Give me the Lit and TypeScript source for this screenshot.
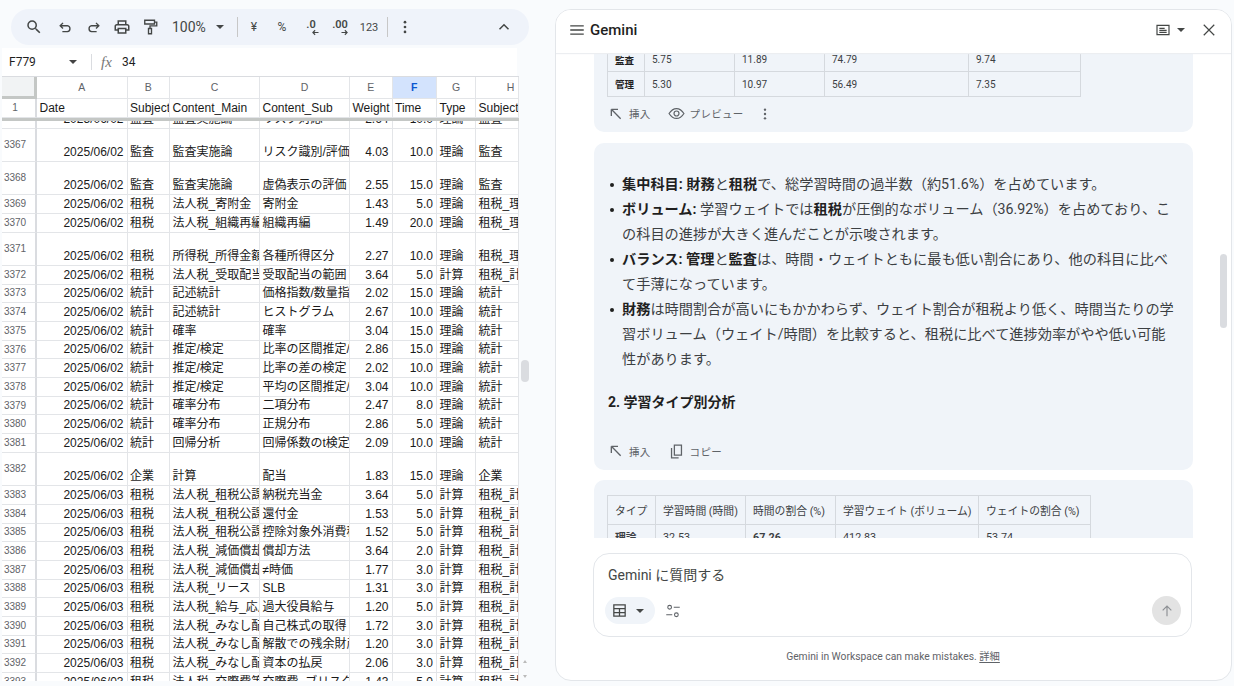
import {LitElement, html, css} from 'lit';
import {customElement} from 'lit/decorators.js';

const P: Record<string, string> = {
  search: 'M15.5 14h-.79l-.28-.27A6.471 6.471 0 0 0 16 9.5 6.5 6.5 0 1 0 9.5 16c1.61 0 3.09-.59 4.23-1.57l.27.28v.79l5 4.99L20.49 19l-4.99-5zm-6 0C7.01 14 5 11.99 5 9.5S7.01 5 9.5 5 14 7.01 14 9.5 11.99 14 9.5 14z',
  print: 'M19 8h-1V3H6v5H5c-1.66 0-3 1.34-3 3v6h4v4h12v-4h4v-6c0-1.66-1.34-3-3-3zM8 5h8v3H8V5zm8 12v2H8v-4h8v2zm2-2v-2H6v2H4v-4c0-.55.45-1 1-1h14c.55 0 1 .45 1 1v4h-2z',
};

const fill = (name: string, size = 18) => html`<svg width=${size} height=${size} viewBox="0 0 24 24" fill="currentColor"><path d=${P[name]}></path></svg>`;
const stroke = (d: string, size = 18, sw = 1.8) => html`<svg width=${size} height=${size} viewBox="0 0 24 24" fill="none" stroke="currentColor" stroke-width=${sw}><path d=${d}></path></svg>`;
const caret = () => html`<svg width="8" height="4" viewBox="0 0 8 4" fill="currentColor"><path d="M0 0h8L4 4z"></path></svg>`;
const dots = (size = 18) => html`<svg width=${size} height=${size} viewBox="0 0 24 24" fill="currentColor"><circle cx="12" cy="5.5" r="1.8"></circle><circle cx="12" cy="12" r="1.8"></circle><circle cx="12" cy="18.5" r="1.8"></circle></svg>`;

type Row = [string, string, string, string, string, string, string, string, string, string?];
const d2 = '2025/06/02';
const d3 = '2025/06/03';
// last flag: s = scrolled under the frozen row, t = tall row
const rows: Row[] = [
  ['3366', d2, '監査', '監査実施論', 'リスク対応', '2.64', '10.0', '理論', '監査', 's'],
  ['3367', d2, '監査', '監査実施論', 'リスク識別/評価', '4.03', '10.0', '理論', '監査', 't'],
  ['3368', d2, '監査', '監査実施論', '虚偽表示の評価', '2.55', '15.0', '理論', '監査', 't'],
  ['3369', d2, '租税', '法人税_寄附金', '寄附金', '1.43', '5.0', '理論', '租税_理論'],
  ['3370', d2, '租税', '法人税_組織再編', '組織再編', '1.49', '20.0', '理論', '租税_理論'],
  ['3371', d2, '租税', '所得税_所得金額', '各種所得区分', '2.27', '10.0', '理論', '租税_理論', 't'],
  ['3372', d2, '租税', '法人税_受取配当', '受取配当の範囲', '3.64', '5.0', '計算', '租税_計算'],
  ['3373', d2, '統計', '記述統計', '価格指数/数量指数', '2.02', '15.0', '理論', '統計'],
  ['3374', d2, '統計', '記述統計', 'ヒストグラム', '2.67', '10.0', '理論', '統計'],
  ['3375', d2, '統計', '確率', '確率', '3.04', '15.0', '理論', '統計'],
  ['3376', d2, '統計', '推定/検定', '比率の区間推定/', '2.86', '15.0', '理論', '統計'],
  ['3377', d2, '統計', '推定/検定', '比率の差の検定', '2.02', '10.0', '理論', '統計'],
  ['3378', d2, '統計', '推定/検定', '平均の区間推定/', '3.04', '10.0', '理論', '統計'],
  ['3379', d2, '統計', '確率分布', '二項分布', '2.47', '8.0', '理論', '統計'],
  ['3380', d2, '統計', '確率分布', '正規分布', '2.86', '5.0', '理論', '統計'],
  ['3381', d2, '統計', '回帰分析', '回帰係数のt検定', '2.09', '10.0', '理論', '統計'],
  ['3382', d2, '企業', '計算', '配当', '1.83', '15.0', '理論', '企業', 't'],
  ['3383', d3, '租税', '法人税_租税公課', '納税充当金', '3.64', '5.0', '計算', '租税_計算'],
  ['3384', d3, '租税', '法人税_租税公課', '還付金', '1.53', '5.0', '計算', '租税_計算'],
  ['3385', d3, '租税', '法人税_租税公課', '控除対象外消費税', '1.52', '5.0', '計算', '租税_計算'],
  ['3386', d3, '租税', '法人税_減価償却', '償却方法', '3.64', '2.0', '計算', '租税_計算'],
  ['3387', d3, '租税', '法人税_減価償却', '≠時価', '1.77', '3.0', '計算', '租税_計算'],
  ['3388', d3, '租税', '法人税_リース', 'SLB', '1.31', '3.0', '計算', '租税_計算'],
  ['3389', d3, '租税', '法人税_給与_応用', '過大役員給与', '1.20', '5.0', '計算', '租税_計算'],
  ['3390', d3, '租税', '法人税_みなし配当', '自己株式の取得', '1.72', '3.0', '計算', '租税_計算'],
  ['3391', d3, '租税', '法人税_みなし配当', '解散での残余財産', '1.20', '3.0', '計算', '租税_計算'],
  ['3392', d3, '租税', '法人税_みなし配当', '資本の払戻', '2.06', '3.0', '計算', '租税_計算'],
  ['3393', d3, '租税', '法人税_交際費等', '交際費_ブリスク', '1.43', '5.0', '計算', '租税_計算'],
];

@customElement('app-root')
class AppRoot extends LitElement {
  static override styles = css`
    :host {
      display: flex;
      width: 1234px;
      height: 686px;
      overflow: hidden;
      background: #f9fbfd;
      font-family: Roboto, "Noto Sans CJK JP", sans-serif;
      color: #1f1f1f;
    }
    svg { display: block; flex: none; }

    .sheet { width: 530px; flex: none; display: flex; flex-direction: column; box-sizing: border-box; padding-top: 9px; height: 681px; }
    .toolbar {
      margin-left: 11px;
      width: 518px;
      height: 36px;
      flex: none;
      box-sizing: border-box;
      padding-left: 9px;
      padding-right: 11px;
      border-radius: 18px;
      background: #eff3fa;
      display: flex;
      align-items: center;
      color: #444746;
    }
    .tb { width: 28px; height: 28px; display: flex; align-items: center; justify-content: center; flex: none; font-size: 11px; }
    .tb--search { margin-right: 3px; }
    .tb--small svg { margin-top: 3px; }
    .tb--print { margin-left: 1px; }
    .tb--fmt { font-size: 12px; }
    .tb--arrow { flex-direction: column; font-weight: 600; line-height: 10px; font-size: 11px; box-sizing: border-box; padding-top: 2px; }
    .tb--arrow svg { margin: -2px 0 0 8px; }
    .tb--first { margin-left: 1px; }
    .tb--last { margin-left: auto; }
    .zoom { margin-left: 8px; width: 56px; display: flex; align-items: center; font-size: 14px; gap: 10px; flex: none; }
    .tb-sep { width: 1px; height: 20px; background: #c7c7c7; margin: 0 2px 0 9px; flex: none; }
    .tb-sep--b { margin: 0 3px 0 4px; }

    .formula {
      margin-top: 3px;
      height: 28px;
      flex: none;
      width: 515px;
      margin-left: 2px;
      background: #fff;
      display: flex;
      align-items: center;
      font-size: 12px;
      color: #1f1f1f;
    }
    .formula__name { width: 67px; box-sizing: border-box; padding-left: 7px; flex: none; font-size: 12px; }
    .formula__caret { width: 22px; flex: none; color: #444; }
    .formula__sep { width: 1px; height: 16px; background: #dadce0; flex: none; }
    .formula__fx { margin-left: 9px; width: 21px; font: italic 15px "Liberation Serif", serif; color: #777; flex: none; }

    .grid-area { display: flex; flex: 1; min-height: 0; }
    .grid { width: 517px; margin-left: 2px; flex: none; background: #fff; overflow: hidden; display: flex; flex-direction: column; font: 12px/16px "Liberation Sans", "Noto Sans CJK JP", sans-serif; color: #1a1a1a; }
    .row {
      display: grid;
      grid-template-columns: 35px 90.5px 42.5px 90px 90px 42.5px 44.5px 39px 43px;
      height: 18.7px;
      flex: none;
    }
    .row--t { height: 33.3px; }
    .row--s { height: 8px; }
    .row > div {
      box-sizing: border-box;
      border-right: 1px solid #e3e5e8;
      border-bottom: 1px solid #e3e5e8;
      overflow: hidden;
      white-space: nowrap;
      display: flex;
      align-items: flex-end;
      padding: 0 0 1px 2.5px;
    }
    .row > .rh { font-size: 10px; color: #5f6368; padding: 0 7px 0 0; justify-content: center; align-items: center; border-right: 2px solid #dadce0; }
    .row > .num { justify-content: flex-end; padding: 0 3px 1px 0; }
    .letters { height: 22.7px; border-top: 1px solid #dadce0; box-sizing: border-box; }
    .letters > div { font-size: 10.5px; color: #5f6368; justify-content: center; align-items: center; padding: 0 0 1px; }
    .letters > .corner { background: #f1f3f4; border-right: 3px solid #c4c7c5; border-bottom: 3px solid #c4c7c5; }
    .letters > .active { background: #d3e3fd; color: #0b57d0; font-weight: 700; }
    .letters > .wide { padding-left: 27px; }
    .frozen { height: 19px; }
    .frozen > .rh { font-size: 10px; }
    .freeze { height: 3px; background: #c4c7c5; flex: none; }
    .rail { flex: 1; position: relative; }
    .rail__thumb { position: absolute; left: 2px; top: 284px; width: 8px; height: 22px; border-radius: 4px; background: #dadce0; }
    .rail__up, .rail__down { position: absolute; left: 4px; width: 0; height: 0; border-left: 2.5px solid transparent; border-right: 2.5px solid transparent; }
    .rail__up { top: 584px; border-bottom: 3px solid #bbb; }
    .rail__down { top: 599px; border-top: 3px solid #bbb; }

    .panel {
      margin: 9px 0 0 25px;
      width: 677px;
      height: 672px;
      flex: none;
      box-sizing: border-box;
      background: #fff;
      border: 1px solid #e3e6ea;
      border-radius: 16px;
      display: flex;
      flex-direction: column;
      position: relative;
      overflow: hidden;
    }
    .panel__head {
      height: 43px;
      flex: none;
      box-sizing: border-box;
      padding: 0 13px 3px 12px;
      display: flex;
      align-items: center;
      background: #fff;
      box-shadow: 0 1px 1px #eceef1;
      position: relative;
      z-index: 1;
      color: #444746;
    }
    .panel__title { font-size: 15px; margin-left: 4px; color: #1f1f1f; font-weight: 500; }
    .panel__right { margin-left: auto; display: flex; align-items: center; gap: 6px; }
    .panel__x { margin-left: 9px; }

    .scroll { height: 485px; flex: none; overflow: hidden; padding: 0 38px; display: flex; flex-direction: column; gap: 11px; position: relative; }
    .card { background: #f0f4f9; border-radius: 10px; padding: 0 14px; flex: none; }
    .card--first { border-radius: 0 0 10px 10px; height: 79px; }
    .card--body { height: 327px; box-sizing: border-box; padding-top: 29px; margin-bottom: -1px; }
    .card--last { padding-top: 15px; height: 80px; }
    table { border-collapse: collapse; font-size: 10px; color: #3c4043; margin-left: -1px; }
    td, th { border: 1px solid #d5d9de; padding: 0 7px; height: 24.4px; box-sizing: border-box; text-align: left; font-weight: 400; white-space: nowrap; }
    .t1 { margin-top: -6px; table-layout: fixed; width: 473px; }
    .t1 th { font-weight: 700; font-size: 9.5px; color: #1f1f1f; }
    .t2 { font-size: 10.8px; table-layout: fixed; width: 483px; }
    .t2 th { height: 29px; padding: 0 7px; }
    .t2 td { height: 25px; padding: 0 7px; }
    .strong { font-weight: 700; }
    .actions { display: flex; align-items: center; font-size: 10.5px; letter-spacing: .3px; color: #5f6368; height: 24px; }
    .act { display: flex; align-items: center; gap: 5px; margin-right: 17px; }
    .more { margin-left: -3.5px; }
    .card--first .actions { margin-top: 5px; }
    ul { margin: 0; padding: 0 0 0 14px; list-style: none; font-size: 14.2px; line-height: 25px; width: 555px; color: #3c4043; }
    li { position: relative; }
    li::before { content: ""; position: absolute; left: -12px; top: 11px; width: 4px; height: 4px; border-radius: 50%; background: #1f1f1f; }
    li b { color: #1f1f1f; font-weight: 700; }
    h2 { margin: 18px 0 0; font-size: 14px; line-height: 25px; font-weight: 700; color: #1f1f1f; }
    .card--body .actions { margin-top: 24px; }

    .composer {
      margin: 15px 0 0 37px;
      width: 599px;
      height: 84px;
      flex: none;
      box-sizing: border-box;
      border: 1px solid #e3e6ea;
      border-radius: 16px;
      padding: 10px 10px 11px 11px;
      display: flex;
      flex-direction: column;
      justify-content: space-between;
    }
    .composer__ph { font-size: 14px; line-height: 22px; color: #444746; padding-left: 3px; }
    .composer__tools { display: flex; align-items: center; color: #444746; }
    .chip { width: 50px; height: 27px; border-radius: 14px; background: #f0f4f9; display: flex; align-items: center; gap: 8px; padding-left: 6px; box-sizing: border-box; }
    .tune { margin-left: 9px; color: #5f6368; }
    .send { margin-left: auto; width: 29px; height: 29px; border-radius: 50%; background: #e3e3e3; color: #8f9296; display: flex; align-items: center; justify-content: center; }
    .foot { text-align: center; font-size: 10.3px; line-height: 14px; color: #5f6368; margin-top: 13px; padding-right: 1px; }
    .foot u { text-underline-offset: 2px; }
    .bar { position: absolute; left: 664px; top: 244px; width: 7px; height: 74px; border-radius: 4px; background: #dadce0; z-index: 1; }
  `;

  private renderRow(r: Row) {
    const kind = r[9] ?? '';
    return html`<div class="row ${kind ? 'row--' + kind : ''}">
      <div class="rh">${kind === 's' ? '' : r[0]}</div>
      <div class="num">${r[1]}</div><div>${r[2]}</div><div>${r[3]}</div><div>${r[4]}</div>
      <div class="num">${r[5]}</div><div class="num">${r[6]}</div><div>${r[7]}</div><div>${r[8]}</div>
    </div>`;
  }

  private sheet() {
    const letters = ['A', 'B', 'C', 'D', 'E', 'F', 'G', 'H'];
    const heads = ['Date', 'Subject', 'Content_Main', 'Content_Sub', 'Weight', 'Time', 'Type', 'Subject_Type'];
    return html`<section class="sheet">
      <div class="toolbar">
        <div class="tb tb--search">${fill('search')}</div>
        <div class="tb tb--small">${stroke('M8 3 3.500 7.500 8 12M4 7.500h11a4.800 4.800 0 0 1 0 9.500H7', 15, 2.2)}</div>
        <div class="tb tb--small">${stroke('M16 3l4.500 4.500L16 12M20 7.500H9a4.800 4.800 0 0 0 0 9.500h8', 15, 2.2)}</div>
        <div class="tb tb--print">${fill('print')}</div>
        <div class="tb">${stroke('M5 3h13v5H5zM18 5.500h3v5h-9v3M10 14h4v7h-4z', 18)}</div>
        <div class="zoom">100%${caret()}</div>
        <div class="tb-sep"></div>
        <div class="tb tb--fmt">¥</div>
        <div class="tb tb--fmt">%</div>
        <div class="tb tb--arrow tb--first">.0${stroke('M20 12H5M11 6l-6 6 6 6', 9, 3)}</div>
        <div class="tb tb--arrow tb--first">.00${stroke('M4 12h15M13 6l6 6-6 6', 9, 3)}</div>
        <div class="tb tb--first">123</div>
        <div class="tb-sep tb-sep--b"></div>
        <div class="tb">${dots()}</div>
        <div class="tb tb--last">${stroke('M6 15l6-6 6 6', 18, 2)}</div>
      </div>
      <div class="formula">
        <div class="formula__name">F779</div>
        <div class="formula__caret">${caret()}</div>
        <div class="formula__sep"></div>
        <div class="formula__fx">fx</div>
        <div>34</div>
      </div>
      <div class="grid-area">
        <div class="grid">
          <div class="row letters">
            <div class="corner"></div>
            ${letters.map(l => html`<div class=${l === 'F' ? 'active' : l === 'H' ? 'wide' : ''}>${l}</div>`)}
          </div>
          <div class="row frozen">
            <div class="rh">1</div>
            ${heads.map(h => html`<div>${h}</div>`)}
          </div>
          <div class="freeze"></div>
          ${rows.map(r => this.renderRow(r))}
        </div>
        <div class="rail">
          <div class="rail__thumb"></div>
          <div class="rail__up"></div>
          <div class="rail__down"></div>
        </div>
      </div>
    </section>`;
  }

  private insert() {
    return html`<div class="act">${stroke('M5 5h10M5 5v10M5 5l14 14', 16, 2)}挿入</div>`;
  }

  private gemini() {
    return html`<section class="panel">
      <div class="panel__head">
        ${stroke('M3 6.500h18M3 12h18M3 17.500h18', 18, 1.700)}
        <div class="panel__title">Gemini</div>
        <div class="panel__right">
          ${stroke('M3 5h18v14H3zM6.500 9.500h8M6.500 12.500h11M6.500 15.500h11', 16, 1.800)}
          ${caret()}
          <div class="panel__x">${stroke('M5 5l14 14M19 5 5 19', 18, 1.600)}</div>
        </div>
      </div>
      <div class="scroll">
        <div class="card card--first">
          <table class="t1">
            <colgroup><col style="width:37px"><col style="width:90px"><col style="width:90px"><col style="width:144px"><col style="width:112px"></colgroup>
            <tr><th>監査</th><td>5.75</td><td>11.89</td><td>74.79</td><td>9.74</td></tr>
            <tr><th>管理</th><td>5.30</td><td>10.97</td><td>56.49</td><td>7.35</td></tr>
          </table>
          <div class="actions">
            ${this.insert()}
            <div class="act">${stroke('M1.500 12C5 6.500 8.500 5 12 5s7 1.500 10.500 7C19 17.500 15.500 19 12 19S5 17.500 1.500 12zM12 8.500a3.500 3.500 0 1 0 0 7 3.500 3.500 0 0 0 0-7z', 17, 1.700)}プレビュー</div>
            <div class="more">${dots(16)}</div>
          </div>
        </div>
        <div class="card card--body">
          <ul>
            <li><b>集中科目: 財務</b>と<b>租税</b>で、総学習時間の過半数（約51.6%）を占めています。</li>
            <li><b>ボリューム:</b> 学習ウェイトでは<b>租税</b>が圧倒的なボリューム（36.92%）を占めており、この科目の進捗が大きく進んだことが示唆されます。</li>
            <li><b>バランス: 管理</b>と<b>監査</b>は、時間・ウェイトともに最も低い割合にあり、他の科目に比べて手薄になっています。</li>
            <li><b>財務</b>は時間割合が高いにもかかわらず、ウェイト割合が租税より低く、時間当たりの学習ボリューム（ウェイト/時間）を比較すると、租税に比べて進捗効率がやや低い可能性があります。</li>
          </ul>
          <h2>2. 学習タイプ別分析</h2>
          <div class="actions">
            ${this.insert()}
            <div class="act">${stroke('M9 3h10v14H9zM5 7v14h10', 17, 1.800)}コピー</div>
          </div>
        </div>
        <div class="card card--last">
          <table class="t2">
            <colgroup><col style="width:48px"><col style="width:90px"><col style="width:90px"><col style="width:143px"><col style="width:112px"></colgroup>
            <tr><th>タイプ</th><th>学習時間 (時間)</th><th>時間の割合 (%)</th><th>学習ウェイト (ボリューム)</th><th>ウェイトの割合 (%)</th></tr>
            <tr><td class="strong">理論</td><td>32.53</td><td class="strong">67.26</td><td>412.83</td><td>53.74</td></tr>
          </table>
        </div>
      </div>
      <div class="composer">
        <div class="composer__ph">Gemini に質問する</div>
        <div class="composer__tools">
          <div class="chip">${stroke('M4 4h16v16H4zM4 9.500h16M4 15h16M12 9.500V20', 17, 1.800)}${caret()}</div>
          <div class="tune">${stroke('M13 7h8M3 17h8M10 7a2.500 2.500 0 1 1-5 0 2.500 2.500 0 0 1 5 0zM19 17a2.500 2.500 0 1 1-5 0 2.500 2.500 0 0 1 5 0z', 18, 1.400)}</div>
          <div class="send">${stroke('M12 20V5M5.500 11 12 4.500 18.500 11', 16, 1.800)}</div>
        </div>
      </div>
      <div class="foot">Gemini in Workspace can make mistakes. <u>詳細</u></div>
      <div class="bar"></div>
    </section>`;
  }

  override render() {
    return html`${this.sheet()}${this.gemini()}`;
  }
}

declare global {
  interface HTMLElementTagNameMap {
    'app-root': AppRoot;
  }
}
